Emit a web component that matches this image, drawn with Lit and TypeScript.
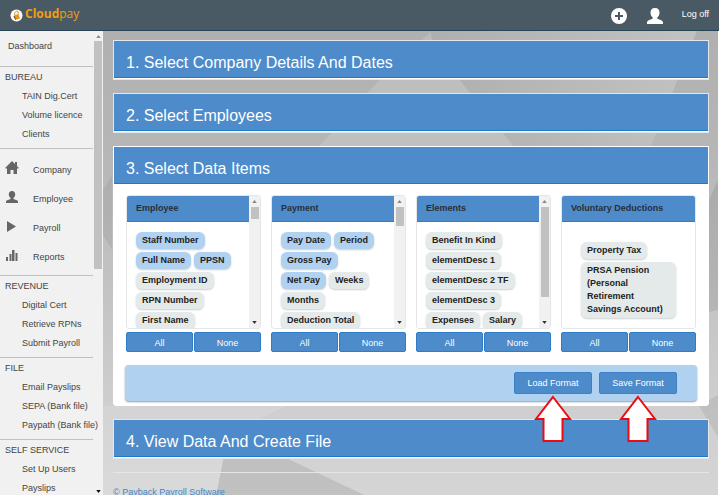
import { LitElement, html, svg, css, nothing } from "lit";
import { customElement, property } from "lit/decorators.js";
import { classMap } from "lit/directives/class-map.js";

interface Chip {
  label: string;
  on?: boolean;
}

interface Group {
  title: string;
  chips: Chip[];
  thumb?: number;
  inset?: boolean;
}

const on = (label: string): Chip => ({ label, on: true });
const off = (label: string): Chip => ({ label });

const GROUPS: Group[] = [
  {
    title: "Employee",
    thumb: 12,
    chips: [on("Staff Number"), on("Full Name"), on("PPSN"), off("Employment ID"), off("RPN Number"), off("First Name")],
  },
  {
    title: "Payment",
    thumb: 19,
    chips: [on("Pay Date"), on("Period"), on("Gross Pay"), on("Net Pay"), off("Weeks"), off("Months"), off("Deduction Total")],
  },
  {
    title: "Elements",
    thumb: 90,
    chips: [off("Benefit In Kind"), off("elementDesc 1"), off("elementDesc 2 TF"), off("elementDesc 3"), off("Expenses"), off("Salary")],
  },
  {
    title: "Voluntary Deductions",
    inset: true,
    chips: [off("Property Tax"), off("PRSA Pension (Personal Retirement Savings Account)")],
  },
];

const NAV_ICONS = {
  home: svg`<path d="M7 0 13.500 6.500V7.500H12V13H8.500V9h-3v4H2V7.500H.5V6.500z"/><path d="M10 1h2v4h-2z"/>`,
  user: svg`<path d="M7 1c2.200 0 3.200 1.500 3.200 3.400 0 1.600-.7 2.800-1.700 3.400v1.200c1.500.6 4 1.100 4.500 2.500V13H1v-1.500c.5-1.400 3-1.900 4.500-2.500V7.800C4.500 7.200 3.800 6 3.800 4.400 3.800 2.500 4.800 1 7 1z"/>`,
  play: svg`<path d="M2 2 11 7.500 2 13z"/>`,
  bars: svg`<path d="M1 9h2v4H1zM4.500 6h2v7h-2zM7 2h2.500v11H7zM10.500 5h2v8h-2z"/>`,
};

@customElement("side-nav")
export class SideNav extends LitElement {
  static styles = css`
    :host {
      display: flex;
      background: #f1f1f1;
      color: #444;
      font-size: 9px;
      overflow: hidden;
    }
    nav {
      flex: 1;
      min-width: 0;
    }
    a {
      display: block;
      color: inherit;
      text-decoration: none;
      white-space: nowrap;
    }
    .top {
      line-height: 31px;
      padding: 0 0 4px 8px;
    }
    .group {
      border-top: 1px solid #c0c0c0;
      padding-bottom: 4px;
    }
    h3 {
      margin: 0;
      padding-left: 5px;
      font-size: 9px;
      font-weight: normal;
      line-height: 20px;
      text-transform: uppercase;
    }
    .sub {
      line-height: 19px;
      padding-left: 22px;
    }
    .icons {
      padding-top: 6px;
    }
    .main {
      display: flex;
      align-items: center;
      gap: 14px;
      height: 29px;
      padding-left: 5px;
    }
    .main svg {
      width: 14px;
      height: 14px;
      margin-bottom: 4px;
      fill: #666;
    }
    .bar {
      display: flex;
      flex-direction: column;
      align-items: center;
      width: 10px;
      padding: 4px 0 2px;
      box-sizing: border-box;
    }
    .bar svg {
      width: 5px;
      height: 3px;
      fill: #888;
    }
    .bar svg.down {
      margin-top: auto;
      fill: #111;
    }
    .thumb {
      width: 8px;
      height: 228px;
      margin-top: 3px;
      background: #c1c1c1;
    }
  `;

  private group(title: string, items: string[]) {
    return html`<section class="group">
      <h3>${title}</h3>
      ${items.map((i) => html`<a class="sub" href="#">${i}</a>`)}
    </section>`;
  }

  private main(icon: unknown, label: string) {
    return html`<a class="main" href="#"><svg viewBox="0 0 14 14" aria-hidden="true">${icon}</svg>${label}</a>`;
  }

  render() {
    return html`
      <nav>
        <a class="top" href="#">Dashboard</a>
        ${this.group("Bureau", ["TAIN Dig.Cert", "Volume licence", "Clients"])}
        <section class="group icons">
          ${this.main(NAV_ICONS.home, "Company")} ${this.main(NAV_ICONS.user, "Employee")}
          ${this.main(NAV_ICONS.play, "Payroll")} ${this.main(NAV_ICONS.bars, "Reports")}
        </section>
        ${this.group("Revenue", ["Digital Cert", "Retrieve RPNs", "Submit Payroll"])}
        ${this.group("File", ["Email Payslips", "SEPA (Bank file)", "Paypath (Bank file)"])}
        ${this.group("Self Service", ["Set Up Users", "Payslips"])}
      </nav>
      <div class="bar" aria-hidden="true">
        <svg viewBox="0 0 6 4"><path d="M0 4 3 0 6 4z" /></svg>
        <div class="thumb"></div>
        <svg class="down" viewBox="0 0 6 4"><path d="M0 0h6L3 4z" /></svg>
      </div>
    `;
  }
}

@customElement("item-card")
export class ItemCard extends LitElement {
  @property({ attribute: false }) group!: Group;

  static styles = css`
    :host {
      display: block;
      min-width: 0;
      font-size: 9px;
    }
    .card {
      display: flex;
      height: 134px;
      box-sizing: border-box;
      border: 1px solid #e6e6e6;
      border-radius: 3px;
      overflow: hidden;
    }
    .content {
      flex: 1;
      min-width: 0;
      overflow: hidden;
    }
    h3 {
      margin: 0;
      padding: 0 9px;
      background: #4d8bcb;
      border-bottom: 1px solid #2f7cc8;
      color: #2a2f36;
      font-size: 9px;
      line-height: 25px;
    }
    .chips {
      display: flex;
      flex-wrap: wrap;
      gap: 3px;
      padding: 10px 10px 0 9px;
    }
    .inset {
      padding: 20px 19px 0;
    }
    .chip {
      padding: 2px 6px;
      border: 0;
      border-radius: 6px;
      background: #e4eaea;
      box-shadow: 0 1px 2px #0003;
      color: #222;
      font: bold 9px / 13px "Liberation Sans", Arial, sans-serif;
      text-align: left;
    }
    .on {
      background: #b0d1f0;
    }
    .scroll {
      display: flex;
      flex-direction: column;
      align-items: center;
      width: 11px;
      padding: 4px 0;
      box-sizing: border-box;
      background: #f1f1f1;
    }
    .scroll svg {
      width: 5px;
      height: 3px;
      fill: #888;
    }
    .scroll svg.down {
      margin-top: auto;
      fill: #333;
    }
    .thumb {
      width: 8px;
      margin-top: 4px;
      background: #c1c1c1;
    }
    .actions {
      display: grid;
      grid-template-columns: 1fr 1fr;
      gap: 1px;
      margin-top: 3px;
    }
    .action {
      height: 20px;
      padding: 1px 0 0;
      border: 1px solid #2f7cc8;
      border-radius: 2px;
      background: #4d8bcb;
      color: #fff;
      font: 9px "Liberation Sans", Arial, sans-serif;
    }
  `;

  render() {
    const { title, chips, thumb, inset } = this.group;
    return html`
      <div class="card">
        <div class="content">
          <h3>${title}</h3>
          <div class=${classMap({ chips: true, inset: !!inset })}>
            ${chips.map(
              (c) => html`<button class=${classMap({ chip: true, on: !!c.on })} aria-pressed=${c.on ? "true" : "false"}>${c.label}</button>`
            )}
          </div>
        </div>
        ${thumb
          ? html`<div class="scroll" aria-hidden="true">
              <svg viewBox="0 0 6 4"><path d="M0 4 3 0 6 4z" /></svg>
              <div class="thumb" style="height:${thumb}px"></div>
              <svg class="down" viewBox="0 0 6 4"><path d="M0 0h6L3 4z" /></svg>
            </div>`
          : nothing}
      </div>
      <div class="actions">
        <button class="action">All</button>
        <button class="action">None</button>
      </div>
    `;
  }
}

@customElement("app-root")
export class AppRoot extends LitElement {
  static styles = css`
    :host {
      display: flex;
      flex-direction: column;
      height: 100vh;
      overflow: hidden;
      background: #fff;
      font-family: "Liberation Sans", Arial, sans-serif;
      font-size: 9px;
    }
    header {
      display: flex;
      align-items: center;
      flex: none;
      height: 31px;
      box-sizing: border-box;
      margin-right: 1px;
      padding: 0 10px;
      background: #4a5a64;
      border-bottom: 1px solid #274454;
    }
    .brand {
      display: flex;
      align-items: center;
      gap: 2px;
      margin-right: auto;
      color: #f39c12;
      font: 12px/16px "Open Sans", sans-serif;
      text-decoration: none;
    }
    .brand svg {
      width: 13px;
      height: 13px;
    }
    .brand span {
      padding-bottom: 2px;
    }
    .tool {
      display: flex;
      padding: 1px 0 0;
      border: 0;
      background: none;
      margin-right: 18px;
    }
    .tool svg {
      width: 18px;
      height: 18px;
      fill: #fff;
    }
    .logoff {
      padding-bottom: 2px;
      color: #fff;
      text-decoration: none;
    }
    .body {
      display: flex;
      flex: 1;
      min-height: 0;
    }
    side-nav {
      flex: none;
      width: 103px;
    }
    main {
      position: relative;
      flex: 1;
      min-width: 0;
      margin-right: 2px;
      padding: 9px 9px 0 10px;
      overflow: hidden;
    }
    .backdrop {
      position: absolute;
      inset: 0;
      width: 100%;
      height: 100%;
    }
    .stack {
      position: relative;
      display: flex;
      flex-direction: column;
      gap: 13px;
    }
    .panel {
      border: 1px solid #e4e7ea;
      background: #fff;
    }
    .panel h2 {
      margin: 0;
      font-size: 16px;
      font-weight: normal;
    }
    .title {
      display: block;
      width: 100%;
      height: 37px;
      padding: 8px 12px 0;
      border: 0;
      border-bottom: 1px solid #1c7bc8;
      background: #4d8bcb;
      color: #fff;
      font: 16px "Liberation Sans", Arial, sans-serif;
      text-align: left;
    }
    .shut {
      padding-bottom: 1px;
    }
    .open {
      border-color: #fff;
      border-radius: 0 0 3px 3px;
    }
    .content {
      padding: 11px 11px 4px;
    }
    .cards {
      display: grid;
      grid-template-columns: repeat(4, minmax(0, 1fr));
      gap: 10px;
      padding: 0 1px;
    }
    .formats {
      display: flex;
      justify-content: flex-end;
      gap: 7px;
      margin-top: 13px;
      padding: 7px 20px;
      border-radius: 4px;
      background: #b0d1f0;
      box-shadow: 0 1px 2px #0006;
    }
    .slot {
      position: relative;
    }
    .format {
      display: block;
      width: 78px;
      height: 22px;
      padding: 0;
      border: 1px solid #3c80c8;
      border-radius: 2px;
      background: #4d8bcb;
      color: #fff;
      font: 9px "Liberation Sans", Arial, sans-serif;
    }
    .pointer {
      position: absolute;
      z-index: 1;
      top: 100%;
      left: 50%;
      width: 38px;
      height: 48px;
      transform: translateX(-50%);
    }
    footer {
      border-top: 1px solid #e6e6e6;
      padding-top: 13px;
      line-height: 12px;
    }
    footer a {
      color: #4585c6;
      text-decoration: none;
    }
  `;

  private shut(title: string) {
    return html`<section class="panel shut">
      <h2><button class="title" aria-expanded="false">${title}</button></h2>
    </section>`;
  }

  private format(label: string) {
    return html`<div class="slot">
      <button class="format">${label}</button>
      <svg class="pointer" viewBox="0 0 38 48" aria-hidden="true">
        <path d="M19 3 36 25H28.500V47H9.500V25H2z" fill="#fff" stroke="#ee0a10" stroke-width="2" />
      </svg>
    </div>`;
  }

  private backdrop() {
    return html`<svg class="backdrop" viewBox="104 31 614 464" preserveAspectRatio="none" aria-hidden="true">
      <defs>
        <linearGradient id="base" x1="0" y1="0" x2="0" y2="1">
          <stop offset="0" stop-color="#b0b0b0" />
          <stop offset=".25" stop-color="#b6b6b6" />
          <stop offset=".8" stop-color="#cecece" />
          <stop offset="1" stop-color="#d5d5d5" />
        </linearGradient>
        <linearGradient id="facet" x1="0" y1="0" x2="1" y2="0">
          <stop offset="0" stop-color="#afafaf" />
          <stop offset="1" stop-color="#c2c2c2" />
        </linearGradient>
      </defs>
      <path d="M104 31H718V495H104z" fill="url(#base)" />
      <path d="M320 146 380 80 432 31 514 146z" fill="#fff" opacity=".15" />
      <path d="M431 31H697L651 146H514L434 48z" fill="url(#facet)" />
      <path d="M104 190 113 175V250L104 235z" fill="#000" opacity=".06" />
      <path d="M709 200 718 180V310L709 312z" fill="#000" opacity=".08" />
      <path d="M104 406H287L260 419 226 450 217 495H104z" fill="#fff" opacity=".12" />
      <path d="M226 450H270L365 495H217z" fill="#000" opacity=".09" />
      <path d="M699 406 718 437V395z" fill="#000" opacity=".07" />
    </svg>`;
  }

  render() {
    return html`
      <header>
        <a class="brand" href="#">
          <svg viewBox="0 0 13 13" aria-hidden="true">
            <circle cx="6.500" cy="6.500" r="6" fill="#fff" />
            <path d="M5 6 8.500 5 10 9.500 5.500 11 3.500 8z" fill="#e8951c" />
            <path d="M4.500 6.500C4.500 3 6 2 7 2s1.500 1.500 1 3" fill="none" stroke="#c98a2c" />
            <path d="M4 7 5.500 10.500" stroke="#6c5638" />
          </svg>
          <span><b>Cloud</b>pay</span>
        </a>
        <button class="tool" aria-label="Add">
          <svg viewBox="0 0 18 18">
            <path fill-rule="evenodd" d="M9 1a8 8 0 1 1 0 16A8 8 0 0 1 9 1zM8 5v3H5v2h3v3h2v-3h3V8h-3V5z" />
          </svg>
        </button>
        <button class="tool" aria-label="Account">
          <svg viewBox="0 0 18 18">
            <path d="M9 1c3 0 4.500 2 4.500 4.500 0 2.300-.8 4-2.200 5v1.300c2.200.8 5.700 1.700 5.700 3.700V17H1v-1.500c0-2 3.500-2.900 5.700-3.700v-1.300c-1.400-1-2.200-2.700-2.200-5C4.500 3 6 1 9 1z" />
          </svg>
        </button>
        <a class="logoff" href="#">Log off</a>
      </header>
      <div class="body">
        <side-nav></side-nav>
        <main>
          ${this.backdrop()}
          <div class="stack">
            ${this.shut("1. Select Company Details And Dates")} ${this.shut("2. Select Employees")}
            <section class="panel open">
              <h2><button class="title" aria-expanded="true">3. Select Data Items</button></h2>
              <div class="content">
                <div class="cards">${GROUPS.map((g) => html`<item-card .group=${g}></item-card>`)}</div>
                <div class="formats">${this.format("Load Format")} ${this.format("Save Format")}</div>
              </div>
            </section>
            ${this.shut("4. View Data And Create File")}
            <footer><a href="#">© Payback Payroll Software</a></footer>
          </div>
        </main>
      </div>
    `;
  }
}
